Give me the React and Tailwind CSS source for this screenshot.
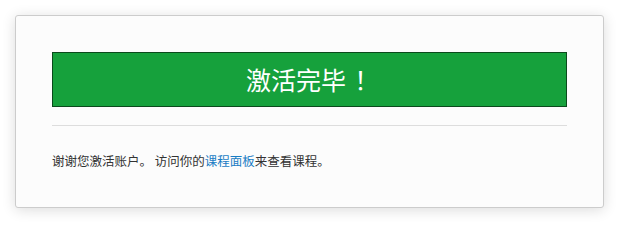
export default function App() {
  return (
    <div className="w-[617px] h-[225px] bg-white pt-[15px] pl-[15px] [text-spacing-trim:space-all]" style={{ fontFamily: '"Noto Sans CJK SC", "Liberation Sans", sans-serif' }}>
      <div className="w-[589px] h-[193px] bg-[#fcfcfc] border border-[#cccccc] rounded-[3px] shadow-[0_2px_14px_rgba(0,0,0,0.14)] px-[36px] pt-[36px]">
        <div className="h-[55px] bg-[#16a13c] border border-[#0b4a1c] flex items-center justify-center text-white text-[25px] leading-none">
          <span>激活完毕<span className="pl-[2px] font-['Noto_Sans_CJK_TC',sans-serif]">！</span></span>
        </div>
        <div className="mt-[18px] h-px bg-[#dddddd]" />
        <p className="mt-[25px] text-[12.5px] leading-[20px] text-[#333333] whitespace-pre">
          {"谢谢您激活账户。 访问你的"}<a className="text-[#1a7dc4]">课程面板</a>{"来查看课程。"}
        </p>
      </div>
    </div>
  );
}
